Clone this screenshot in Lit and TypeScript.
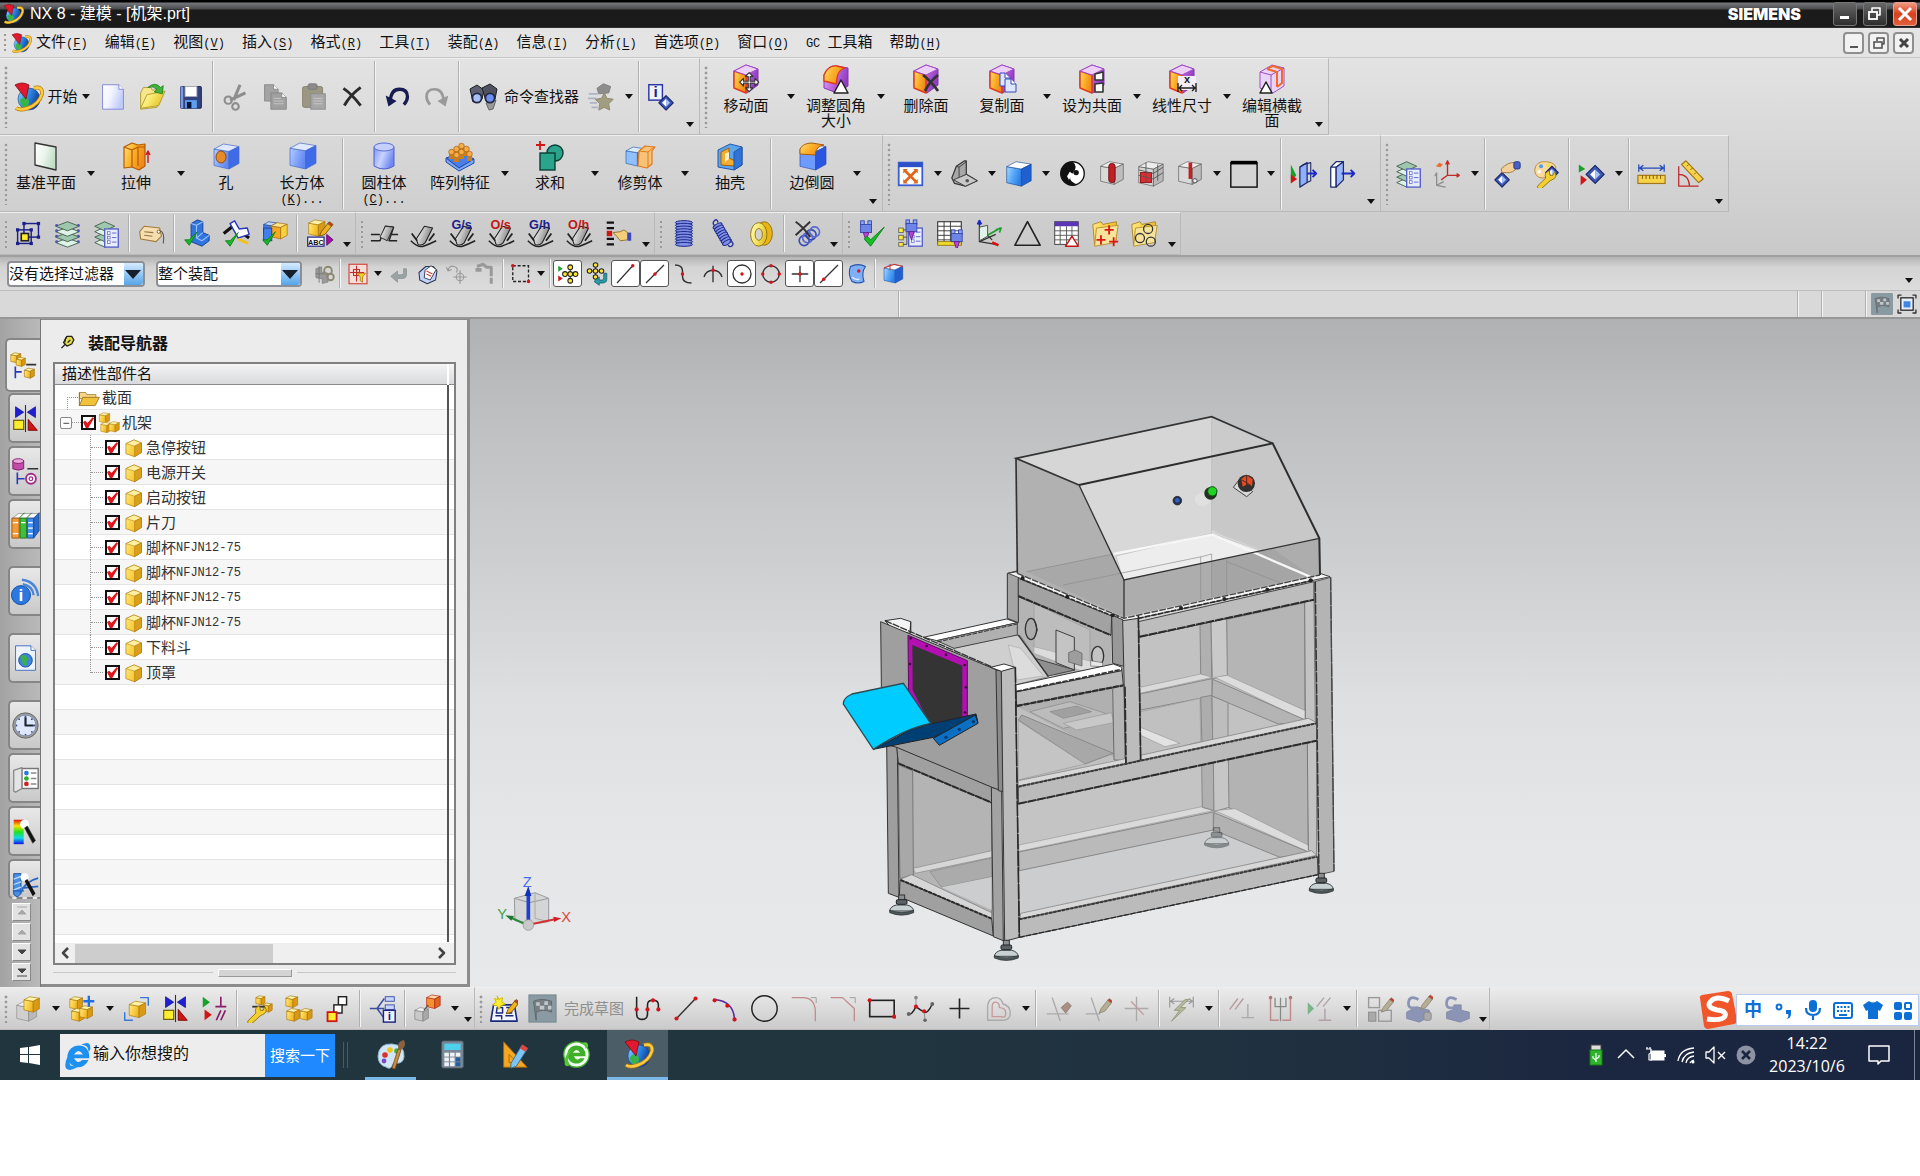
import { LitElement, html, svg, css, nothing } from "lit";
import { customElement, state } from "lit/decorators.js";

type Frag = unknown;

/* ---------- drawing helpers ---------- */
const p = (d: string, fill = "none", stroke = "none", w = 1): Frag =>
  svg`<path d=${d} fill=${fill} stroke=${stroke} stroke-width=${w} stroke-linejoin="round" />`;
const c = (x: number, y: number, r: number, fill = "none", stroke = "none", w = 1): Frag =>
  svg`<circle cx=${x} cy=${y} r=${r} fill=${fill} stroke=${stroke} stroke-width=${w} />`;
const r = (x: number, y: number, w: number, h: number, fill = "none", stroke = "none", sw = 1, rx = 0): Frag =>
  svg`<rect x=${x} y=${y} width=${w} height=${h} rx=${rx} fill=${fill} stroke=${stroke} stroke-width=${sw} />`;
const t = (x: number, y: number, s: number, fill: string, text: string): Frag =>
  svg`<text x=${x} y=${y} font-size=${s} fill=${fill} font-weight="700" text-anchor="middle" font-family="Liberation Sans, sans-serif">${text}</text>`;
const g = (tr: string, body: Frag, op = 1): Frag => svg`<g transform=${tr} opacity=${op}>${body}</g>`;

const cube = (x: number, y: number, s: number, front: string, top: string, side: string, line: string): Frag => {
  const q = (a: number, b: number) => `${x + a * s} ${y + b * s}`;
  return [
    p(`M${q(0, 0.2)}L${q(0.6, 0.3)}L${q(0.6, 1)}L${q(0, 0.86)}Z`, front, line, 0.7),
    p(`M${q(0, 0.2)}L${q(0.38, 0)}L${q(1, 0.1)}L${q(0.6, 0.3)}Z`, top, line, 0.7),
    p(`M${q(0.6, 0.3)}L${q(1, 0.1)}L${q(1, 0.78)}L${q(0.6, 1)}Z`, side, line, 0.7),
  ];
};
const gold = (x: number, y: number, s: number) => cube(x, y, s, "url(#gGold)", "#fff3a8", "#d79a12", "#a87408");
const blue = (x: number, y: number, s: number) => cube(x, y, s, "url(#gBlue)", "#dfe9ff", "#3f6be8", "#4668c8");
const sky = (x: number, y: number, s: number) => cube(x, y, s, "url(#gSky)", "#ffffff", "#1f5fd0", "#18499c");
const grey = (x: number, y: number, s: number) => cube(x, y, s, "#c9c9c9", "#f2f2f2", "#a9a9a9", "#7d7d7d");
const wire = (x: number, y: number, s: number) => [
  cube(x, y, s, "#d9d9d9", "#efefef", "#bdbdbd", "#555"),
];
const check = p("M4 22l5 6 9-15-9 9z", "#19b82a", "#0c7f18", 1);
const tick = (x: number, y: number) => g(`translate(${x} ${y})`, check);
const diamond = (x: number, y: number, s: number) => [
  p(`M${x} ${y - s}L${x + s} ${y}L${x} ${y + s}L${x - s} ${y}Z`, "#3d56b8", "#16245e", 1.2),
  p(`M${x} ${y - s * 0.55}V${y + s * 0.55}L${x - s * 0.55} ${y}Z`, "#fff"),
  p(`M${x} ${y - s * 0.55}V${y + s * 0.55}L${x + s * 0.55} ${y}Z`, "#a9c3f5"),
];
const layers = (x: number, y: number, w = 24, n = 4, pins = false) =>
  Array.from({ length: n }, (_, i) => n - 1 - i).map((i) => [
    p(`M${x} ${y + 5 + i * 6}l${w / 2}-5 ${w / 2} 5-${w / 2} 5z`, i % 2 ? "#dff2e6" : "#9fc7ad", "#3f5f4c", 1),
    pins ? [c(x + 1, y + 4 + i * 6, 1.6, "#4d55b8"), c(x + w - 1, y + 4 + i * 6, 1.6, "#4d55b8")] : nothing,
  ]);
const list = (x: number, y: number) => [
  r(x, y, 15, 20, "#e9eeff", "#5560c8", 1.5),
  [4, 9, 14].map((d) => [r(x + 3, y + d - 1, 3, 3, "#fff", "#5560c8", 0.8), p(`M${x + 8} ${y + d + 0.5}h5`, "none", "#5560c8")]),
];
const page = (x: number, y: number, w: number, h: number, fill: string, line: string) => [
  p(`M${x} ${y}h${w - 5}l5 5v${h - 5}h-${w}z`, fill, line, 1),
  p(`M${x + w - 5} ${y}v5h5`, "#fff", line, 1),
];
const pencil = (x: number, y: number, a = "#f2b21c", b = "#7a5408") => [
  p(`M${x} ${y}l2-5 8-10 4 3-8 10z`, a, b, 1),
  p(`M${x + 9} ${y - 14}l2-2 4 3-2 2z`, "#c93a2a", b, 0.8),
];
const wrench = (x: number, y: number) =>
  p(`M${x} ${y}l9-9q-2-6 4-8l1 5 3 0 2-4q4 6-3 9l-2 1-10 9q-4 1-4-3z`, "#f3cf2f", "#8f6e05", 1);
const face = (extra: Frag) => [
  p("M4 8L16 2 28 6 28 22 17 30 4 24Z", "url(#gPurple)", "#8a35b3", 1),
  p("M4 8L16 12V30L4 25Z", "url(#gOrange)", "#e03a1a", 1.5),
  p("M4 8L16 2 28 6 16 12Z", "#ecd0f8", "#a04cc8", 1),
  extra,
];
const weld = (tag = "", color = "") => [
  p("M2 24q8 8 14 6t14-6", "none", "#222", 1.6),
  p("M8 22L17 8l9 2-8 16q-4 4-8 2z", "url(#gSteel)", "#222", 1.2),
  p("M3 16l6 8M28 16l-6 8", "none", "#222", 2),
  tag ? t(15, 11, 14, color, tag) : nothing,
];
const dot = (x: number, y: number) => c(x, y, 2.3, "#d4141b");
const redline = (x1: number, y1: number, x2: number, y2: number) => p(`M${x1} ${y1}L${x2} ${y2}`, "none", "#333", 1.6);
const mirror = [
  p("M5 3v12l9-6zM27 3v12l-9-6z", "#1f1fd6", "#0f0f8a", 0.8),
  r(3, 18, 11, 10, "#ffee2e", "#6c5b00", 1.3),
  p("M19 17v12h10z", "#d01515", "#7c0000", 1),
  p("M16 1v30", "none", "#333", 1.2),
];
const nx = [
  c(17, 18, 11, "url(#gGlobe)", "#123b86", 0.6),
  p("M8 19q5-5 8-1t-2 9q-6-1-6-8z", "#37b34a"),
  p("M22 7q9-2 8 6-3 10-14 14-8 3-12 0", "none", "#b97a0a", 4),
  p("M22 7q9-2 8 6-3 10-14 14-8 3-12 0", "none", "#fbcb42", 2.6),
  p("M3 4q7-4 14 0l-3 14z", "#e01a2c", "#7f0912", 0.8),
];
const funnel = (x: number, y: number) => p(`M${x} ${y}h11l-4 5v7l-3-2v-5z`, "#f7cf2c", "#a07906", 1);
const spring = (x: number, y: number, w: number, n: number) =>
  Array.from({ length: n }, (_, i) => svg`<ellipse cx=${x + w / 2} cy=${y + i * 3} rx=${w / 2} ry="2.2" fill="#7f8fe8" stroke="#1c2a86" stroke-width="1.1" />`);
const probe = (x: number, y: number) => [
  r(x, y, 4, 5, "#8fa7f5", "#3547b0"), r(x + 8, y, 4, 5, "#8fa7f5", "#3547b0"),
  r(x, y + 4, 12, 9, "#6d85e6", "#3547b0"), p(`M${x + 3} ${y + 13}h6l-3 9z`, "#b64ad8", "#6b1a8a"),
];
const folder = (extra: Frag) => [p("M2 6l9-3 2 3 15-3v20l-24 6z", "url(#gGold)", "#a9852a", 1), p("M6 10l24-3-3 19-23 4z", "#f7e39a", "#b58f2e", 1), extra];
const star4 = (x: number, y: number) => p(`M${x - 5} ${y}h10M${x} ${y - 5}v10`, "none", "#e01515", 2);
const cross4 = p("M16 6l4 4h-3v5h5v-3l4 4-4 4v-3h-5v5h3l-4 4-4-4h3v-5h-5v3l-4-4 4-4v3h5v-5h-3z", "#fff", "#333", 1.2);

/* ---------- icon set ---------- */
const ICONS: Record<string, Frag> = {
  nx,
  newdoc: page(5, 3, 23, 27, "url(#gPage)", "#7d84d6"),
  open: [p("M4 12l3-6h8l2 3 9-1v6l-4 14-18 2z", "#f5e58b", "#b3982d"), p("M4 29l7-15 20-4-7 16z", "url(#gLemon)", "#b3982d"), p("M12 6q8-7 14 0l3-2-1 9-9-2 3-3q-4-4-10-2z", "#3fb33a", "#1b7418", 0.8)],
  save: [r(5, 5, 23, 24, "#31427e", "#141f4d", 1, 1), r(10, 5, 13, 11, "#fff", "#aab"), r(10, 20, 13, 9, "#5ea0f0"), r(12, 22, 5, 7, "#0a1238"), r(5, 5, 3, 24, "#7d9be0")],
  cut: [p("M21 3l-7 17M27 12L10 20", "none", "#8d8d8d", 3.4), c(8, 20, 4, "none", "#8d8d8d", 2.4), c(16, 27, 3.6, "none", "#8d8d8d", 2.4)],
  copy: [page(5, 3, 15, 18, "#a3a3a3", "#8a8a8a"), page(12, 12, 17, 18, "#a0a0a0", "#868686"), p("M15 18h8M15 21h11M15 24h11", "none", "#c9c9c9")],
  paste: [r(4, 5, 22, 23, "#9b9783", "#85816f", 1, 2), r(10, 2, 10, 6, "#8b8b8b", "#777", 1, 2), r(13, 13, 16, 17, "#a7a7a7", "#8b8b8b"), p("M16 18h10M16 21h10M16 24h10", "none", "#c9c9c9")],
  del: [p("M6 7q9 6 19 19M25 6Q13 15 7 26", "none", "#2b2b2b", 3.2)],
  undo: [p("M8 21Q9 8 18 8t9 8q0 5-4 9", "none", "#171c52", 3.6), p("M3 15l3 12 9-6z", "#171c52")],
  redo: [p("M24 21Q23 8 14 8t-9 8q0 5 4 9", "none", "#9a9a9a", 3), p("M29 15l-3 12-9-6z", "#9a9a9a")],
  finder: [p("M2 8l7-4 7 5-2 9-9 3z", "#5c6070", "#1c1e24"), p("M14 7l8-4 7 5-2 10-9 2z", "#50535e", "#1c1e24"), p("M18 22l10-3-3 9-4 1z", "#999", "#666"), c(9, 17, 4.6, "#a9c0f5", "#242a44", 1.8), c(22, 17, 4.6, "#6f90f0", "#242a44", 1.8)],
  tool: [p("M11 7l7-5 8 3-2 7-11 1z", "#8d8d8d", "#7c7c7c"), p("M19 12l3 6 7 1-5 5 1 7-6-3-6 3 1-7-5-5 7-1z", "#a19d80", "#8c886e"), p("M2 13h10M1 18h9M3 23h8M5 28h7", "none", "#aeb4c8", 2)],
  info: [r(2, 3, 15, 17, "#eef1ff", "#2c38a0", 1.6), t(9.5, 17, 17, "#1c2480", "i"), diamond(21, 23, 8)],
  moveface: face(g("translate(4 4) scale(.95)", cross4)),
  filletface: [p("M4 12Q8 2 16 3l12 2v18l-11 7-13-5z", "url(#gPurple)", "#8a35b3"), p("M4 12Q8 2 17 3l8 2q-7 2-8 10l-1 6-12-3z", "url(#gOrange)", "#e03a1a", 1.3), p("M21 17l7 13H14z", "#fff", "#222", 1.5)],
  delface: face(p("M13 12q8 6 15 16M28 12q-8 6-13 16", "none", "#333", 2.8)),
  copyface: face([page(14, 10, 10, 13, "#dfe6ff", "#3748b8"), page(19, 16, 11, 13, "#dfe6ff", "#3748b8")]),
  coplanar: face([p("M19 11l8-2v8h-8zM19 21l8-1v9h-8z", "#fff", "#333", 1.6)]),
  lineardim: face([r(12, 13, 18, 14, "#f4eef8"), p("M12 20v9M30 20v9M13 25h16M16 22l-3 3 3 3M26 22l3 3-3 3", "none", "#222", 1.4), t(21, 20, 11, "#222", "x")]),
  editsection: [p("M4 9l12-7 12 3v18l-11 7-13-5z", "#ead4f6", "#a04cc8"), p("M4 9l11 3v18M15 12l13-7", "none", "#a04cc8"), p("M11 6l10 3v15M11 6l6-3 9 3v14l-5 4", "none", "#ef6a2c", 2), p("M10 19l6 11H4z", "#fff", "#222", 1.5)],
  plane: [p("M5 3l21 4v23L5 25z", "url(#gPlane)", "#333", 1.3)],
  extrude: [p("M4 7l8-4 6 2 7-1v22l-6 4-7-3-8 1z", "url(#gOrange)", "#b55a05", 1.2), p("M4 7l8 3 6-3 7 0M12 10v17M18 7v19", "none", "#b55a05", 1.2), p("M28 23V12M26 15l2-4 2 4", "none", "#d01515", 1.4)],
  hole: [blue(4, 4, 25), svg`<ellipse cx="11" cy="17" rx="5" ry="6" fill="#e78a2a" stroke="#944b06" />`],
  block: blue(4, 3, 26),
  cyl: [p("M6 7v19q10 6 20 0V7z", "url(#gCyl)", "#4a5fd0"), svg`<ellipse cx="16" cy="7" rx="10" ry="4" fill="#c5d0ff" stroke="#5a6fd8" />`],
  pattern: [p("M2 18l16-6 12 7-15 9z", "#4b7ee8", "#1e4ba8"), p("M2 18v4l13 9 15-8v-4l-15 9z", "#7ea8f5", "#1e4ba8"), [[7, 12], [12, 9], [17, 6], [12, 15], [17, 12], [22, 9], [25, 14]].map(([x, y]) => [p(`M${x - 2} ${y}v7h5v-7z`, "#c97f1e"), c(x + 0.5, y, 2.8, "#f5ad4a", "#a86412", 0.7)])],
  unite: [c(21, 13, 8, "#2aa58c", "#0b3f35", 1.4), r(6, 13, 15, 17, "#2aa58c", "#0b3f35", 1.4), p("M6 1v9M2 5h9", "none", "#d01515", 1.8)],
  trim: [cube(2, 7, 19, "#8fc0ff", "#dcecff", "#4a8ae8", "#2f64b0"), p("M15 11l6-5 10 1-3 4v13l-5 4-9-2z", "#f7c277", "#e07a1a", 1.2), p("M15 11l9 1v15M24 12l6-5", "none", "#e07a1a")],
  shell: [p("M4 10l12-6 12 3v18l-8 5-16-3z", "#5fa4ee", "#2158a5"), p("M7 12l8-4v10l6 3v5L7 25z", "#f4ad33", "#9e6206"), p("M11 14l4-2v7l-4 3z", "#fff1c4"), p("M20 12l8-5v18l-8 5z", "#2f74d6", "#2158a5")],
  blend: [cube(4, 4, 26, "#6e9bff", "#e6eeff", "#2a57e0", "#2c4fb5"), p("M4 14V9q3-6 12-6l12 2q-8 1-9 10z", "url(#gOrange)", "#a8600a")],
  fit: [r(3, 4, 26, 25, "#fff", "#3c5fd0", 2), r(3, 4, 26, 5, "#2b50c8"), p("M10 13l12 12M22 13L10 25", "none", "#e0651a", 3), p("M8 11h5l-5 5zM24 11h-5l5 5zM8 27h5l-5-5zM24 27h-5l5-5z", "#e0651a")],
  seat: [p("M2 21L7 8l9-6 2 0v15l12 7-13 6-12-3z", "#a7a7a7", "#3a3a3a", 1.4), p("M7 8l3 1 0 12 8-4M10 9l8-6", "none", "#3a3a3a"), p("M4 23l14-6 12 7-13 6z", "#c9c9c9", "#3a3a3a"), c(19, 24, 2, "#555")],
  shaded: sky(3, 3, 27),
  yin: [c(16, 16, 13, "#fff", "#111", 1.5), p("M16 3a13 13 0 1 0 5 25Q9 24 16 16t0-13z", "#111"), c(20, 15, 3, "#111"), p("M13 14l4 3-5 6-2-4z", "#fff")],
  vcyl: [wire(4, 3, 25), r(13, 5, 7, 21, "#c21f24", "#6d0b0e", 1, 3)],
  vgrid: [cube(3, 3, 27, "#d4d4d4", "#ededed", "#b8b8b8", "#555"), r(5, 15, 12, 11, "#e02b30", "#8d1014"), p("M3 18l16 4 11-7M11 4v22M24 6v18M3 12l16 4 11-7", "none", "#555")],
  vpin: [wire(4, 3, 25), p("M17 4v18", "none", "#c21f24", 4), c(22, 24, 2.4, "#eee", "#444")],
  canvas: [r(2, 4, 29, 27, "#d4d4d4", "#111", 1.6), r(2, 2, 29, 4, "#000")],
  clipin: [p("M2 6v20l6-8zM2 8l6 5", "#19a02a"), p("M2 17v10l7-5z", "#d01515"), p("M12 9l8-5v22l-8 5z", "#8fb0ff", "#1d2c6e", 1.4), p("M12 9l4-3 8-2v20l-4 2", "none", "#1d2c6e", 1.2), p("M20 16h9M26 12l4 4-4 4", "none", "#1a28c8", 2)],
  clip: [p("M3 9h6v22H3zM3 9l6-6h8l-8 6", "#fff", "#1d2c6e", 1.4), p("M9 9l8-6v20l-8 8z", "#9db8ff", "#1d2c6e", 1.4), p("M15 16h13M25 12l4 4-4 4", "none", "#1a28c8", 2)],
  layerlist: [layers(3, 3, 22, 4), list(14, 11)],
  csys: [p("M16 3v15h12M16 18l-7 5M14 6l2-4 2 4M26 16l3 2-3 2", "none", "#c02a2a", 1.5), p("M4 15v14l8-4M4 29l10 2M4 15l-2 4", "none", "#8d8d8d", 1.4), p("M3 8l4-4 4 2-3 3z", "#ef6a2c")],
  handobj: [diamond(10, 23, 8), p("M9 11q8-8 15-7l3 5q-5 7-12 6l-5 0z", "#f3cf9a", "#9c7440"), r(23, 3, 7, 8, "#4860c8", "#27357c", 1, 2)],
  palette: [p("M3 12Q4 2 16 3t10 10-9 6q-3 2-6 2-8-1-8-9z", "#f8d9a0", "#b98a2e"), c(10, 8, 2.2, "#4aa0f0"), c(18, 7, 2.2, "#f4e04a"), c(8, 14, 2, "#fff"), diamond(22, 15, 7), wrench(6, 30)],
  showhide: [p("M2 6v9l7-4z", "#19a02a"), p("M4 18v11l7-6z", "#d01515"), diamond(20, 17, 10)],
  ruler: [p("M2 6v8M30 6v8M3 10h26M7 7l-4 3 4 3M25 7l4 3-4 3", "none", "#2448b8", 1.4), r(1, 18, 30, 9, "#f7d34a", "#a4761a", 1.3), p("M6 18v4M10 18v4M14 18v4M18 18v4M22 18v4M26 18v4", "none", "#7a5408")],
  angle: [p("M3 8v22h22M3 17q11 0 12 13", "none", "#c02a2a", 1.4), p("M6 6l5-4 19 20-5 4z", "#f7d34a", "#a4761a", 1.3), p("M12 8l2-2M16 12l2-2M20 17l2-2", "none", "#7a5408")],
  frames: [r(11, 5, 16, 15, "none", "#1b1f8c", 1.6), r(4, 12, 15, 15, "none", "#1b1f8c", 1.6), r(8, 16, 8, 8, "#ffee2e", "#222", 1.8), [[11, 5], [27, 5], [27, 20], [4, 12], [19, 12], [4, 27], [19, 27]].map(([x, y]) => r(x - 1.8, y - 1.8, 3.6, 3.6, "#1b1f8c"))],
  layerpins: layers(3, 3, 26, 4, true),
  tag: [p("M3 14l5-6 17 2 2 9-6 6-17-3z", "#f7deb0", "#a07c3c", 1.2), c(24, 14, 1.8, "#fff", "#7a5a20"), p("M8 14l10 1M8 18l9 1", "none", "#8f7340", 1.2), p("M25 13q6 1 4 14", "none", "#555", 1.2)],
  chkL: [p("M10 5l7-4 6 2v12l7 3v6l-8 6-12-5z", "#2f74e0", "#173f8f"), p("M10 5l6 2v14l6 3M16 7l7-4M22 24l8-6M16 21l7-6", "none", "#9cc2ff", 1.2), tick(-1, 1)],
  chkP: [p("M3 16L13 8l18 13", "none", "#111", 3.5), p("M10 5l5-3 5 9 9-1 2 7-12 4z", "#fff", "#2c3ab8", 1.6), p("M19 22l11 5", "none", "#f2c21a", 3), tick(1, 2)],
  chkB: [cube(4, 3, 15, "#3f7ff0", "#bcd6ff", "#1f55bd", "#173f8f"), cube(12, 4, 18, "#f6a81f", "#ffe28a", "#f8d23c", "#9e6206"), r(4, 10, 9, 14, "#3f7ff0", "#173f8f"), tick(-1, 1)],
  annot: [gold(4, 1, 18), r(3, 20, 18, 10, "#fff", "#1b1f8c", 1.3), t(12, 28.5, 8, "#111", "ABC"), pencil(16, 19), p("M24 17v12l7-6z", "#a012a8", "#5e0a63")],
  weld0: [p("M1 17h10M1 24h10l6-16 9 1-5 15h9M24 17h7", "none", "#222", 1.6), p("M11 20l6-12 9 1-7 15z", "url(#gSteel)", "#222")],
  weld1: weld(),
  weldGs: weld("G/s", "#1b1f8c"),
  weldOs: weld("O/s", "#c01818"),
  weldGh: weld("G/h", "#1b1f8c"),
  weldOh: weld("O/h", "#c01818"),
  thickpick: [p("M3 4h8M3 10h8M3 22h8M3 28h8", "none", "#111", 2.6), r(3, 13, 6, 6, "#d01515"), p("M10 15l8-1 4-2 4 3v8l-8 1-4-5z", "#f3cf7a", "#8f6e25"), r(26, 15, 4, 9, "#3a48b8")],
  spring1: spring(7, 4, 19, 9),
  spring2: [g("rotate(-30 16 16)", spring(10, 6, 11, 8)), p("M8 8q-4-3-1-6t4 2M24 24q5 2 3 5t-5 0", "none", "#2a3a9a", 1.6)],
  ring: [svg`<ellipse cx="19" cy="16" rx="9" ry="13" fill="#e8b41a" stroke="#8f6e05" />`, svg`<ellipse cx="13" cy="17" rx="9" ry="13" fill="url(#gLemon)" stroke="#8f6e05" />`, svg`<ellipse cx="13" cy="17" rx="4" ry="6.5" fill="#d2d2d2" stroke="#8f6e05" />`],
  springdel: [g("rotate(-40 18 20)", [c(12, 20, 5.5, "none", "#3a4bb0", 1.8), c(17, 20, 5.5, "none", "#5a6bd0", 1.8), c(22, 20, 5.5, "none", "#3a4bb0", 1.8), c(27, 20, 5.5, "none", "#5a6bd0", 1.8)]), p("M4 3q9 6 16 17M20 3L4 18", "none", "#333", 2.2)],
  probe1: [probe(4, 2), p("M8 22l7 8L30 9l-15 14-4-4z", "#14bf24", "#0c7f18", 1)],
  probe2: [r(3, 10, 5, 5, "#ffee2e", "#666"), r(3, 18, 5, 5, "#ffee2e", "#666"), r(3, 26, 5, 4, "#ffee2e", "#666"), p("M8 12h4v16H8M8 20h4", "none", "#444"), list(14, 10), probe(11, 1)],
  probe3: [r(3, 3, 26, 25, "#fff", "#333", 1.2), p("M3 8h26M3 13h26M3 18h26M3 23h26M10 3v25M17 3v25", "none", "#333"), r(3, 25, 26, 4, "#f2dc2e", "#8f7a05"), probe(18, 12)],
  datumcs: [p("M6 3v22l18-8M6 9l14 14M6 25l18 3", "none", "#333", 1.4), p("M6 9l9-2v12l-9 5z", "#e1f2e8", "#444"), p("M4 6l2-4 2 4", "none", "#1a28c8", 2.2), p("M24 12l6-2-2 5M15 18l14-8", "none", "#19a02a", 1.8), p("M20 26l7 3", "none", "#d01515", 3)],
  tri: p("M16 3l14 26H2z", "none", "#222", 1.8),
  table: [r(3, 3, 26, 25, "#fff", "#444", 1.1), r(3, 3, 26, 5, "#5b35b8"), p("M3 13h26M3 18h26M3 23h26M9 8v20M16 8v20M22 8v20", "none", "#555"), p("M22 19l7 11H15z", "#fff", "#c01818", 1.6)],
  foldstars: folder([star4(20, 12), star4(11, 23), star4(25, 25)]),
  foldrings: folder([c(20, 11, 5, "none", "#333", 1.4), c(11, 21, 5, "none", "#333", 1.4), c(23, 25, 5, "none", "#333", 1.4)]),
  gface: g("translate(4 3) scale(.85)", [p("M3 7l9-3v8l10 2v14l-9 2v-7l-10-2z", "#9a9a9a", "#777"), c(22, 10, 6, "none", "#8c886e", 3), c(26, 20, 5, "none", "#8c886e", 3), p("M8 3v26M2 15h14", "none", "#777", 1.4)]),
  snapfilter: [r(4, 3, 24, 26, "#f4dcd8", "#d03a30", 1.4), p("M14 5v21M5 14h19M10 10h8v8h-8z", "none", "#c02a2a", 1.4), funnel(15, 15)],
  back: p("M26 9v8q0 5-6 5h-6v5l-9-8 9-7v5h6q2 0 2-3V9z", "#9aa3a3", "#8b9393"),
  note: [p("M4 14l9-8h10l5 6-2 12-11 5-10-5z", "#c6d2f5", "#2a3550", 1.4), p("M12 11l8-6 7 5-8 14-8-3z", "#fff", "#2a3550", 1.2), p("M14 12l8 4M14 16l6 3", "none", "#d03a30", 1.4)],
  gcurve: [c(20, 20, 5, "none", "#999", 1.4), p("M20 11v18M11 20h18M4 12q1-8 8-6t3 8M4 12l-2-5M4 12l5-2", "none", "#999", 1.6)],
  gpath: [p("M4 6l8-3 5 4h6v7M23 14v5M23 21v8", "none", "#999", 4), r(2, 8, 8, 5, "#999")],
  rect: [svg`<rect x="5" y="5" width="21" height="21" fill="none" stroke="#222" stroke-width="1.8" stroke-dasharray="4 2.5" />`, dot(5, 5), dot(26, 26)],
  snapall: [p("M3 5v8l6-4z", "#19a02a"), p("M3 18v8l6-4z", "#d01515"), p("M19 7v18M10 16h18", "none", "#333", 1.4), [[19, 7], [19, 25], [12, 16], [26, 16], [19, 16]].map(([x, y]) => c(x, y, 3.2, "#ffe62e", "#222", 1.4))],
  snaprot: [p("M14 4v16M6 12h16", "none", "#333", 1.4), [[14, 4], [14, 20], [6, 12], [22, 12], [14, 12]].map(([x, y]) => c(x, y, 3, "#ffe62e", "#222", 1.4)), p("M29 15v8q0 5-6 5h-4v3l-7-5 7-6v4h4q2 0 2-3v-6z", "#2a9aa8", "#0f5a66")],
  endpt: [redline(4, 28, 24, 6), dot(25, 5)],
  midpt: [redline(4, 28, 28, 4), dot(16, 16)],
  ctrlpt: [p("M4 4q10 0 10 8v7q0 9 12 9", "none", "#333", 2), dot(14, 16)],
  intpt: [p("M4 20q3-9 12-9t12 9M16 5v22", "none", "#333", 1.8), dot(16, 11)],
  center: [c(16, 16, 12, "none", "#333", 1.8), dot(16, 16)],
  quad: [c(16, 16, 11, "none", "#333", 1.8), dot(16, 5), dot(16, 27), dot(5, 16), dot(27, 16)],
  plus: [p("M16 5v22M5 16h22", "none", "#333", 1.8), dot(16, 16)],
  oncurve: [redline(4, 28, 28, 4), dot(9, 23)],
  onface: [p("M6 6q10-5 20 0-6 8-2 20-8 4-16 0Q2 16 6 6z", "#7fb0f5", "#2350a8", 1.4), dot(17, 12), p("M8 20q4 4 10 3", "none", "#dfeaff", 2)],
  solid: [sky(4, 3, 25), p("M4 8l14-5 11 3M12 3v8", "none", "#d03a30", 1.4)],
  flag: [r(1, 1, 30, 30, "#8a9aa3", "#74848d"), p("M6 8q9-4 20 0v12q-9-4-17 0v9M6 8l3 21", "#777f84", "#5f666b"), p("M9 9h4v4h-4zM18 8h4v4h-4zM13 13h5v4h-5zM22 13h4v4h-4z", "#c1c8cc")],
  fullscr: [p("M3 8V3h5M24 3h5v5M29 24v5h-5M8 29H3v-5", "none", "#333", 2), r(7, 7, 18, 18, "#e8f0ff", "#333", 2), r(11, 12, 10, 9, "#3f86e8")],
  load: [cube(3, 8, 22, "#cfcfcf", "#f0f0f0", "#b9b9b9", "#888"), gold(11, 3, 17)],
  addcomp: [gold(2, 3, 14), gold(4, 16, 14), gold(13, 13, 14), p("M23 2v12M17 8h12", "none", "#1f6fe0", 2.6)],
  movecomp: [gold(8, 8, 18), p("M20 4h9v9M24 4h5v5M3 20v9h9M3 25v4h5", "none", "#3a78d8", 1.6)],
  mirror,
  constrain: [p("M3 3v12l8-6z", "#19a02a"), p("M5 17v12l8-6z", "#d01515"), p("M23 3v11M17 14h12M18 29l5-11M23 29l5-11", "none", "#8a1a6a", 1.8)],
  tools: [gold(12, 2, 10), gold(20, 10, 10), p("M8 14h14", "none", "#333", 2), wrench(3, 30)],
  threecubes: [gold(2, 2, 13), gold(3, 16, 14), gold(18, 16, 13)],
  seq: [r(17, 3, 9, 9, "#fff", "#222", 1.6), r(12, 12, 9, 9, "#fff", "#222", 1.6), r(5, 20, 10, 10, "#ffee2e", "#d01515", 2)],
  infotree: [p("M2 16h8l8-11M10 16h8M10 16l8 11", "none", "#3a4ba0", 1.6), r(19, 3, 10, 5, "#c8d6ff", "#3a4ba0"), r(19, 12, 10, 5, "#c8d6ff", "#3a4ba0"), r(17, 18, 13, 13, "#eef1ff", "#1c2480", 1.6), t(23.5, 29, 13, "#1c2480", "i")],
  explode: [grey(2, 15, 15), cube(15, 1, 15, "#f5932b", "#ffd7a0", "#e0651a", "#b01515"), p("M12 18l5-6", "none", "#555", 1.4)],
  sketch: [p("M5 12h23l3 18H2z", "#f4f6ff", "#1b2a7c", 1.8), p("M9 15h6v6H8zM19 15h5l1 6h-6M7 24h7v4M18 24h9", "none", "#1b2a7c", 1.6), p("M9 2l2 4 4-2-1 5 4 2-5 2-2 4-2-4-5-1 4-3-2-4 4 1z", "#ffee2e", "#d0b800"), pencil(19, 22)],
  profile: [p("M4 3v19q0 6 6 6t6-6V12q0-5 6-5t6 5v6", "none", "#222", 1.7), dot(4, 17), dot(16, 17), dot(28, 17), dot(22, 7)],
  line: [redline(5, 27, 26, 5), dot(5, 27), dot(26, 5)],
  arc: [p("M4 6q22 2 22 24", "none", "#5a2a9a", 1.7), dot(4, 7), dot(18, 13), dot(26, 28)],
  circle: c(16, 16, 14, "none", "#222", 1.6),
  gfillet: [p("M3 4h12q13 0 14 14v12", "none", "#c08a8a", 1.4), p("M24 4h6v6", "none", "#999")],
  gchamfer: [p("M3 4h13l13 12v14", "none", "#c08a8a", 1.4), p("M24 4h6v6", "none", "#999")],
  rectangle: [r(3, 7, 27, 18, "none", "#222", 1.8), dot(3, 7), dot(30, 25)],
  spline: [p("M3 22q3 2 8-8 5 4 9 6t9-9", "none", "#222", 1.6), p("M11 4v10M21 28l-1-8", "none", "#888"), dot(11, 14), dot(20, 19), c(11, 4, 2, "#888"), c(29, 11, 2.2, "#666"), c(3, 22, 2.2, "#666"), c(21, 29, 2, "#666")],
  point: p("M16 5v22M5 16h22", "none", "#222", 1.8),
  goffset: [p("M4 29V13q1-9 9-9 6 0 8 7 8 2 8 10t-9 8z", "none", "#aaa", 1.5), p("M9 25V14q0-5 4-5t4 6q7 0 7 6t-5 4z", "none", "#c79a9a", 1.5)],
  gtrim1: [p("M3 22h24M9 4l9 26", "none", "#aaa", 1.5), p("M19 15l7-6 4 4-6 8z", "#a98f83", "#8f7a70")],
  gtrim2: [p("M3 22h16M9 4l9 26", "none", "#aaa", 1.5), pencil(18, 21, "#b5ae93", "#8f8a78")],
  gtrim3: [p("M16 3v27M3 16h26", "none", "#aaa", 1.5), p("M10 8l14 15", "none", "#c79a9a", 1.5)],
  gdim: [p("M3 3v12M29 3v12M4 8h24M8 5L4 8l4 3M24 5l4 3-4 3", "none", "#999", 1.3), p("M20 6L8 18h6L5 30l16-15h-6l9-9z", "#b5b89a", "#93967a")],
  gcon1: [p("M3 17L12 5M9 17L18 5", "none", "#b89a9a", 1.5), p("M23 11v15M16 26h14", "none", "#aaa", 1.5)],
  gcon2: [p("M5 4v25h9M27 4v25h-9", "none", "#c08a8a", 1.6), p("M10 4v10h12V4M16 4v26", "none", "#888", 1.4), c(5, 4, 2, "#b07a7a"), c(27, 4, 2, "#b07a7a")],
  gcon3: [p("M3 9v14l7-7z", "#7ab58a"), p("M13 14l8-10M20 14l8-10M22 16v13M15 29h14", "none", "#b0a0a8", 1.5)],
  gcopy: [r(4, 4, 12, 11, "none", "#999", 1.5), r(15, 18, 14, 12, "none", "#999", 1.5), r(4, 20, 8, 10, "#aaa", "#888"), pencil(18, 20, "#b5ae93", "#8f8a78")],
  gfind: [p("M3 20l11-6 14 4v7l-11 6-14-4z", "#8b94b5", "#7f89a5"), p("M16 6q-10-5-11 3t8 6", "none", "#8b94b5", 3), pencil(18, 17, "#b5ae93", "#8f8a78"), r(22, 20, 8, 9, "#aaa", "#888", 1, 2)],
  gfind2: [p("M4 20l8-3v-5h8v6l9 2v7l-10 4-15-4z", "#8b94b5", "#7f89a5"), p("M15 6Q5 1 4 9t8 6", "none", "#8b94b5", 3)],
  asmnav: [gold(2, 2, 11), gold(8, 7, 10), p("M19 15h11", "none", "#333", 1.8), p("M7 17v13M7 23h7", "none", "#2a3ab8", 1.8), gold(17, 19, 11)],
  partnav: [p("M2 4v9q6 3 12 0V4z", "#c24aa8", "#7a1a68"), svg`<ellipse cx="8" cy="4.5" rx="6" ry="2.6" fill="#eaa8dc" stroke="#7a1a68" />`, p("M18 13h12", "none", "#333", 1.6), p("M7 17v13M7 24h8", "none", "#2a3ab8", 1.8), c(22, 24, 5.5, "#fff", "#a02a88", 2), c(22, 24, 2, "none", "#a02a88", 1.4)],
  books: [p("M2 9l6-5h20l3 0-5 5z", "#fff", "#888", 0.8), p("M1 9h8v22H1z", "#f09a3a", "#9e5206"), p("M10 9h7v22h-7z", "#3fc03a", "#1b7418"), p("M18 9h7v22h-7z", "#3f8ff0", "#1a4a98"), p("M25 9l6-6v20l-6 8z", "#2868c8", "#1a4a98"), p("M2 14h6M2 26h6M11 14h5M19 14h5M19 20h5M19 26h5", "none", "#fff", 1.4), p("M9 9l6-6M17 9l6-6", "none", "#1b7418")],
  infoball: [c(11, 20, 10.5, "#2a78e0", "#134a9c"), t(11, 27, 19, "#fff", "i"), p("M12 3q16 2 18 18M13 8q11 2 12 12", "none", "#4a86d8", 2.6)],
  webpage: [page(5, 2, 22, 27, "#eef4ff", "#3a68c0"), c(16, 18, 7.5, "#3a86e0", "#1a4a98"), p("M10 14q5-4 7 0t4 1q-2 3-4 4l1 5q-5-1-6-5z", "#3fae4a")],
  clock: [c(16, 16, 14, "#9a9a9a", "#666"), c(16, 16, 11.5, "#dfe8fb", "#7f8ba8"), p("M16 7v9h9", "none", "#1b2430", 2.4), [[16, 6], [26, 16], [16, 26], [6, 16], [23, 9], [23, 23], [9, 23], [9, 9]].map(([x, y]) => c(x, y, 1, "#33508c"))],
  doccard: [r(12, 5, 18, 22, "#fff", "#777", 1.6), p("M3 7l9-3v23l-7 4-2-1z", "#e4e4e4", "#888", 1.4), c(17, 10, 2.6, "#2a78e0"), c(17, 16, 2.6, "#2ab02a"), c(17, 22, 2.6, "#d02020"), p("M22 10h6M22 16h6M22 22h6", "none", "#888", 1.6)],
  spectrum: [r(3, 3, 11, 27, "url(#gRain)"), c(15, 8, 5, "#fff"), p("M15 12l3-2 9 16-3 3z", "#111", "#444", 0.8)],
  drill: [p("M3 4h8v22l-4 4-4-3z", "#4a90e0", "#1a4a98"), p("M3 10l8-3M3 16l8-3M3 22l8-3", "none", "#bcdcff", 1.4), p("M10 26q6-14 20-17M12 20l18-2M2 23h12", "none", "#2a68c8", 2), c(15, 8, 4.5, "#fff"), p("M15 12l3-2 9 16-3 3z", "#111")],
  pin: [p("M8 14l5-9 7 0 3 5-3 6-7 3z", "#e4dc4a", "#222", 1.8), p("M10 14q-1-5 3-9", "none", "#222", 1.6), p("M11 16l-6 6M14 14l4-4", "none", "#222", 2)],
  folderopen: [p("M2 8h9l2 3h13v6H2z", "#f7d68a", "#8f6e1a"), p("M2 27l5-12h24l-6 12z", "#f2c13a", "#8f6e1a", 1.2), p("M2 8v19", "none", "#8f6e1a", 1.4)],
  asm: [gold(2, 1, 15), gold(4, 15, 15), gold(16, 14, 15)],
  part: [p("M3 9L16 3l12 5v15L17 30 3 25z", "url(#gGold)", "#a87408", 1), p("M3 9l14 4 11-5L16 3z", "#fff0a0", "#a87408", 0.8), p("M17 13l11-5v15l-11 7z", "#d9a01c", "#a87408", 0.8)],
  paint: [p("M3 18Q4 5 17 6t12 13q-1 7-8 6-4 0-4 3-2 4-6 1-8-2-8-11z", "#cfe6f5", "#8fb4cc"), c(10, 17, 2.8, "#d8322a"), c(15, 12, 2.8, "#f2c21a"), c(22, 13, 2.8, "#3fae4a"), c(9, 23, 2.4, "#7a4ac8"), p("M17 30l6-19 3 1-6 19z", "#c98a4a", "#7a4a18", 0.8), p("M23 11q-1-8 6-9 3 6-3 10z", "#8a6240")],
  calc: [r(4, 1, 24, 30, "#7a8794", "#4a5662", 1, 2), r(7, 4, 18, 7, "#4fd0ee"), [0, 1, 2].map((i) => [0, 1, 2].map((j) => r(7 + i * 6.3, 14 + j * 5.3, 5, 4.3, i === 2 && j > 0 ? "#1f5f9e" : "#eef3f7")))],
  setsq: [p("M4 2v28h26zM10 16v9h9z", "#f5a623", "#a86405", 1), svg`<path d="M12 26L24 6l6 4-12 19-6 2z" fill="#7fc4f2" stroke="#2d6f9e"/>`, p("M22 9l3-4 6 4-3 4z", "#e0443a")],
  eie: [c(16, 16, 14, "#f2fff0", "#3fae2a", 1.4), p("M16 6a10 10 0 1 0 9 14h-5q-4 4-7-2h13q0-12-10-12zm-4 8q4-6 8 0z", "#3fae2a"), p("M3 27Q1 18 12 8 3 21 9 27q-4 4-6 0zM20 4q9-4 9 3l-3 3q0-6-6-6z", "#56c838")],
  ie: [p("M16 5a12 12 0 1 0 11 16h-7q-5 5-9-2h17q0-14-12-14zm-5 10q5-8 10 0z", "#1e90f0"), p("M2 30Q-1 20 12 8 4 20 7 27q8 3 15-4Q8 36 2 30zM19 4q11-5 10 5l-2 4q1-9-8-9z", "#1e90f0")],
};

const icon = (name: string, cls = "ic") => html`<svg class=${cls} viewBox="0 0 32 32" aria-hidden="true">${ICONS[name]}</svg>`;

/* ---------- toolbar data ---------- */
type Item =
  | { k: "b"; i: string; l: string; d?: boolean }
  | { k: "B"; i: string; l: string; key?: string; d?: boolean }
  | { k: "|" };
const b = (i: string, l: string, d = false): Item => ({ k: "b", i, l, d });
const B = (i: string, l: string, d = false, key = ""): Item => ({ k: "B", i, l, d, key });
const S: Item = { k: "|" };

const MENUS: [string, string][] = [["文件", "F"], ["编辑", "E"], ["视图", "V"], ["插入", "S"], ["格式", "R"], ["工具", "T"], ["装配", "A"], ["信息", "I"], ["分析", "L"], ["首选项", "P"], ["窗口", "O"], ["GC 工具箱", ""], ["帮助", "H"]];

const SYNC: Item[] = [B("moveface", "移动面", true), B("filletface", "调整圆角大小", true), B("delface", "删除面"), B("copyface", "复制面", true), B("coplanar", "设为共面", true), B("lineardim", "线性尺寸", true), B("editsection", "编辑横截面")];
const FEATURE: Item[] = [B("plane", "基准平面", true), B("extrude", "拉伸", true), B("hole", "孔"), B("block", "长方体", false, "K"), S, B("cyl", "圆柱体", false, "C"), B("pattern", "阵列特征", true), B("unite", "求和", true), B("trim", "修剪体", true), B("shell", "抽壳"), S, B("blend", "边倒圆", true)];
const VIEW: Item[] = [b("fit", "适合窗口", true), b("seat", "定向视图", true), b("shaded", "带边着色", true), b("yin", "面分析"), b("vcyl", "剖切"), b("vgrid", "栅格"), b("vpin", "定位", true), b("canvas", "背景", true), S, b("clipin", "编辑截面"), b("clip", "剪切截面")];
const UTIL: Item[] = [b("layerlist", "图层设置"), b("csys", "坐标系", true), S, b("handobj", "编辑对象"), b("palette", "对象显示"), S, b("showhide", "显示和隐藏", true), S, b("ruler", "测量距离"), b("angle", "测量角度")];
const ROW3: Item[][] = [
  [b("frames", "框架"), b("layerpins", "图层"), b("layerlist", "图层列表"), S, b("tag", "属性"), S, b("chkL", "检查实体"), b("chkP", "检查草图"), b("chkB", "检查装配"), S, b("annot", "注释")],
  [b("weld0", "焊缝"), b("weld1", "角焊"), b("weldGs", "G/s"), b("weldOs", "O/s"), b("weldGh", "G/h"), b("weldOh", "O/h"), b("thickpick", "厚度")],
  [b("spring1", "压缩弹簧"), b("spring2", "拉伸弹簧"), b("ring", "环"), S, b("springdel", "删除弹簧")],
  [b("probe1", "检验"), b("probe2", "检验列表"), b("probe3", "检验表"), b("datumcs", "基准坐标系"), b("tri", "三角"), b("table", "表格"), b("foldstars", "点集"), b("foldrings", "圆集")],
];
const ASM: Item[] = [b("load", "加载", true), b("addcomp", "添加组件", true), b("movecomp", "移动组件"), b("mirror", "镜像装配"), b("constrain", "装配约束"), S, b("tools", "工具"), b("threecubes", "组件阵列"), b("seq", "顺序"), S, b("infotree", "信息"), S, b("explode", "爆炸图", true)];
const SKETCH: Item[] = [b("profile", "轮廓"), b("line", "直线"), b("arc", "圆弧"), b("circle", "圆"), b("gfillet", "圆角"), b("gchamfer", "倒角"), b("rectangle", "矩形"), b("spline", "样条"), b("point", "点"), b("goffset", "偏置", true), S, b("gtrim1", "快速修剪"), b("gtrim2", "快速延伸"), b("gtrim3", "拐角"), S, b("gdim", "尺寸", true), S, b("gcon1", "约束"), b("gcon2", "对称"), b("gcon3", "显示约束", true), S, b("gcopy", "复制"), b("gfind", "附着"), b("gfind2", "定向")];

const SNAPS: [string, string, boolean][] = [["snapall", "启用捕捉", true], ["snaprot", "重置", false], ["endpt", "端点", true], ["midpt", "中点", true], ["ctrlpt", "控制点", false], ["intpt", "交点", false], ["center", "圆心", true], ["quad", "象限点", false], ["plus", "现有点", true], ["oncurve", "曲线上的点", true], ["onface", "面上的点", false]];

const PARTS: [string, string][] = [["急停按钮", ""], ["电源开关", ""], ["启动按钮", ""], ["片刀", ""], ["脚杯", "NFJN12-75"], ["脚杯", "NFJN12-75"], ["脚杯", "NFJN12-75"], ["脚杯", "NFJN12-75"], ["下料斗", ""], ["顶罩", ""]];

/* ---------- 3D model, drawn on a canvas of third-pixel units ---------- */
const E = "#3c3c3c";
const q = (pts: string, fill: string, stroke = "none", w = 3) => svg`<polygon points=${pts} fill=${fill} stroke=${stroke} stroke-width=${w} stroke-linejoin="round" />`;
const l = (pts: string, stroke = E, w = 4, dash = "") => svg`<polyline points=${pts} fill="none" stroke=${stroke} stroke-width=${w} stroke-dasharray=${dash || "none"} />`;
const foot = (x: number, y: number, op = 1) => svg`<g transform=${`translate(${x} ${y})`} opacity=${op}>
  <rect x="-9" y="-42" width="18" height="30" fill="#8a8f92" stroke="#333" stroke-width="3" />
  <rect x="-16" y="-28" width="32" height="14" rx="4" fill="#5b6265" stroke="#222" stroke-width="3" />
  <path d="M-36 6Q-34-8-16-12H16Q34-8 36 6Z" fill="#c7d1d4" stroke="#3b4245" stroke-width="3" />
  <path d="M-36 4Q0 16 36 4V11Q0 26-36 11Z" fill="#4c5558" stroke="#2b3032" stroke-width="2" /></g>`;

const machine = svg`<g transform="translate(830 400) scale(.33333)">
  <!-- lower bay interior -->
  ${q("565,1212 1460,1022 1455,1372 570,1555", "#c4c4c5")}
  ${q("340,1462 1150,1290 1350,1370 575,1548 480,1530", "#cccdce")}
  ${q("1195,1080 1435,1025 1435,1345 1195,1222", "#b3b3b4", "#888")}
  ${q("205,1090 485,1205 485,1550 210,1440", "#b4b4b4", "#777")}
  ${q("250,1405 485,1352 485,1372 255,1420", "#d6d6d6", "#888", 2)}
  ${q("300,1415 485,1374 485,1430 335,1462", "#ababab", "#888", 2)}
  ${q("335,1462 485,1431 485,1530", "#cccdce")}
  ${q("567,1335 1115,1220 1150,1232 567,1354", "#dadada", "#999", 2)}
  ${q("567,1356 1150,1236 1150,1290 568,1412", "#bababa", "#888")}
  ${q("205,1095 248,1112 250,1425 210,1436", "#a8a8a8", "#777")}
  ${q("1115,1085 1150,1078 1152,1232 1117,1222", "#b0b0b0", "#888")}
  ${q("1150,1078 1195,1075 1197,1222 1152,1235", "#c6c6c6", "#888")}
  ${q("1155,1232 1215,1226 1440,1338 1440,1358", "#dcdcdc", "#999", 2)}
  ${q("1152,1238 1450,1362 1350,1372 1150,1290", "#b2b2b2", "#888")}
  ${q("1432,1030 1460,1022 1460,1370 1435,1350", "#c3c3c3", "#777")}
  ${foot(1160, 1325, 0.55)}
  ${q("210,1438 245,1424 485,1538 485,1556", "#d6d6d6", "#777", 2)}
  ${q("572,1540 1445,1352 1460,1366 570,1556", "#d8d8d8", "#777", 2)}
  <!-- upper right bay interior -->
  ${q("925,712 1452,600 1458,965 930,1080", "#c2c2c3")}
  ${q("1190,658 1425,608 1425,935 1190,828", "#b5b5b6", "#888")}
  ${q("1110,672 1143,664 1145,835 1112,822", "#b0b0b0", "#888")}
  ${q("1143,664 1190,655 1192,826 1147,836", "#c9c9c9", "#888")}
  ${q("930,862 1112,822 1148,832 930,880", "#dadada", "#999", 2)}
  ${q("930,882 1146,836 1146,888 932,930", "#bababa", "#888")}
  ${q("1155,832 1192,826 1426,932 1425,962", "#dcdcdc", "#999", 2)}
  ${q("1148,838 1440,966 1345,972 1146,888", "#b4b4b4", "#888")}
  ${q("932,935 1110,895 1112,1025 932,1070", "#c0c0c0", "#999", 2)}
  ${q("1112,892 1146,886 1148,1025 1116,1032", "#adadad", "#888")}
  ${q("1146,888 1194,908 1194,1012 1148,1022", "#bdbdbd", "#888")}
  ${q("932,982 1050,1030 1005,1040 932,1006", "#e2e2e2", "#999", 2)}
  ${q("1424,606 1452,600 1456,968 1426,955", "#c3c3c3", "#777")}
  <!-- left middle bay -->
  ${q("560,920 850,862 850,1082 565,1145", "#c0c0c1")}
  ${q("565,922 850,864 850,1070", "#b0b0b0")}
  ${q("575,945 850,1060 765,1092 565,960", "#a8a8a8", "#888")}
  ${q("600,935 720,905 850,948 700,985", "#bcbcbc", "#888", 2)}
  ${q("660,935 740,918 785,935 700,955", "#a0a0a0", "#888", 2)}
  ${q("700,970 845,938 850,968 740,990", "#c8c8c8", "#999", 2)}
  ${q("565,962 765,1092 565,1140", "#c4c4c5", "#999", 2)}
  ${q("848,862 882,855 885,1082 852,1080", "#b5b5b5", "#666")}
  ${q("565,1142 868,1080 1435,955 1460,968 565,1158", "#d8d8d8", "#777", 2)}
  <!-- upper chamber, behind the side rail -->
  ${q("565,590 845,705 845,800 700,830 560,810", "#b4b4b5")}
  ${q("612,610 612,740 780,800 780,690", "#bdbdbd", "#999", 2)}
  ${q("612,740 845,800 760,815 612,760", "#dcdcdc", "#aaa", 2)}
  ${q("678,690 733,712 733,810 678,788", "#c4c4c5", E, 3)}
  ${q("716,758 735,750 756,760 756,798 716,786", "#9d9d9d", "#555", 2)}
  <ellipse cx="603" cy="687" rx="17" ry="32" fill="#ababab" stroke="#333" stroke-width="4" />
  ${l("612,658 622,690 612,716", "#333", 3)}
  <ellipse cx="803" cy="768" rx="18" ry="29" fill="#c4c4c4" stroke="#333" stroke-width="4" />
  ${q("782,782 818,788 818,800 782,798", "#e8e8e8", "#666", 2)}
  <!-- chute and left cross members -->
  ${q("370,745 545,705 572,708 655,830 555,855 400,790", "#cfcfd0", "#888")}
  ${q("535,735 572,745 640,828 560,840", "#dcdcdc", "#aaa", 2)}
  ${q("615,775 735,810 655,828", "#8f8f8f", "#444")}
  ${l("565,705 655,830", "#333", 4)}
  ${q("280,712 530,657 562,668 320,722", "#ffffff", "#333")}
  ${q("320,722 562,668 562,705 372,745", "#b0b0b0", "#444")}
  ${l("322,726 562,672", "#333", 3, "14 4")}
  ${q("556,855 850,792 876,802 876,812 558,876", "#ffffff", "#333")}
  ${q("558,876 876,812 880,856 560,918", "#bababa", "#333")}
  ${l("560,874 876,808", "#333", 5, "16 4")}
  ${l("560,918 880,856", "#2e2e2e", 7, "18 3")}
  <!-- top frame -->
  ${q("532,520 565,512 565,668 532,655", "#a4a4a4", "#333")}
  ${q("535,520 565,514 860,640 845,650", "#f2f2f2", "#444")}
  ${q("565,535 845,648 843,705 565,590", "#a2a2a2", "#444")}
  ${l("565,588 843,706", "#2a2a2a", 6, "22 3")}
  ${l("572,536 848,648", "#2e2e2e", 5, "14 4")}
  ${q("860,650 1470,520 1500,530 880,665", "#f4f4f4", "#444")}
  ${q("925,665 1452,545 1452,600 928,712", "#bdbdbd", "#444")}
  ${l("928,710 1452,599", "#2a2a2a", 6, "26 3")}
  ${l("925,655 1450,541", "#2e2e2e", 5, "16 4")}
  ${q("845,645 880,660 885,800 848,790", "#999", "#333")}
  ${q("878,662 925,655 932,1080 888,1092", "#bcbcbc", "#333")}
  ${l("925,645 932,1080", "#2a2a2a", 5, "40 4")}
  ${l("885,860 888,1090", "#2a2a2a", 5, "30 5")}
  ${q("1454,545 1502,532 1512,1414 1466,1424", "#b4b4b4", "#555")}
  ${l("1456,545 1467,1424", "#333", 4, "30 4")}
  ${l("1502,532 1512,1414", "#444", 4, "40 3")}
  <!-- shelf rail and bottom rail -->
  ${q("565,1160 1460,970 1460,1022 565,1212", "#bbbbbb", "#444")}
  ${l("565,1160 1460,970", "#3a3a3a", 6, "10 3")}
  ${l("565,1211 1460,1022", "#2a2a2a", 6, "26 3")}
  ${q("568,1558 1462,1370 1464,1424 568,1612", "#bbbbbb", "#444")}
  ${l("568,1558 1462,1370", "#3a3a3a", 6, "10 3")}
  ${l("568,1612 1464,1424", "#2a2a2a", 4, "16 4")}
  <!-- left leg and left side rails -->
  ${q("170,1030 202,1040 207,1492 175,1480", "#9e9e9e", "#333")}
  ${q("200,1040 485,1160 485,1208 205,1090", "#a0a0a0", "#333")}
  ${l("205,1090 485,1208", "#2a2a2a", 6, "22 3")}
  ${q("210,1440 485,1556 490,1608 208,1490", "#a0a0a0", "#333")}
  ${l("212,1440 485,1556", "#2a2a2a", 6, "12 3")}
  ${q("165,662 212,655 242,665 240,700 190,690", "#f4f4f4", "#333")}
  <!-- front left plate -->
  ${q("152,665 505,812 510,1172 200,1042 156,1030", "#9f9f9f", "#333")}
  ${l("165,662 512,812", "#333", 4, "22 3")}
  ${l("242,665 242,700", "#333", 4)}
  ${q("484,1162 515,1172 520,1622 490,1610", "#a3a3a3", "#333")}
  ${q("498,810 514,812 520,1175 505,1172", "#8b8b8b", "#333")}
  ${q("514,812 556,802 568,1612 524,1624", "#bcbcbc", "#333")}
  ${l("556,802 568,1612", "#2a2a2a", 5, "46 4")}
  ${q("482,802 522,792 556,802 514,814", "#ffffff", "#333")}
  <!-- outlet frame -->
  ${q("234,706 412,782 412,950 300,975 236,900", "#b30fb3", "#5e0a5e", 3)}
  ${q("247,735 397,797 397,950 300,972 248,870", "#343434")}
  ${["242,715", "290,738", "348,764", "404,795", "240,792", "408,862", "405,937"].map((s) => { const [x, y] = s.split(","); return svg`<circle cx=${x} cy=${y} r="4" fill="#3b083b" />`; })}
  <!-- tray -->
  ${q("130,1048 240,990 300,972 438,942 444,968 310,1012", "#003f73", "#222")}
  ${q("310,1015 436,945 444,970 328,1036", "#0b6fc4", "#222")}
  ${[[348, 1012], [388, 988], [430, 965]].map(([x, y]) => svg`<circle cx=${x} cy=${y} r="5" fill="#083a66" />`)}
  <path d="M40 912Q38 895 66 882L220 850 302 970Q225 985 130 1048Z" fill="#00ccff" stroke="#2a4a55" stroke-width="4" />
  ${foot(215, 1527)}${foot(529, 1663)}${foot(1474, 1462)}
  <!-- hood -->
  ${q("558,175 1145,50 1328,130 1468,415 1470,525 882,655 562,520", "#c9c9ca")}
  ${q("558,175 747,255 882,540 882,652 562,518", "#b1b1b2")}
  ${q("590,515 850,462 882,540 882,650", "#a8a8a9")}
  ${q("558,175 1145,50 1145,172 747,255", "#d6d6d6")}
  ${q("1145,50 1328,130 1145,172", "#cbcbcc")}
  ${q("747,255 1145,172 1145,390 850,462", "#d8d8d9")}
  ${q("1145,172 1328,130 1468,415 1380,448 1145,390", "#c8c8c9")}
  ${q("848,462 1145,390 1385,455 1325,447 880,540", "#d9d9da")}
  ${q("858,468 1145,400 1300,455 880,540", "#ededed", "#bbb", 2)}
  ${q("1150,395 1468,415 1380,434 1300,452", "#c8c8c9")}
  ${q("882,540 1468,415 1470,525 882,650", "#adadae")}
  ${q("1145,484 1330,447 1440,525 1145,592", "#a5a5a6")}
  ${l("850,462 1148,404 1440,530", "#f6f6f6", 7)}
  ${l("590,515 850,462", "#888", 2)}${l("700,555 1115,470 1145,462 1145,592", "#8c8c8c", 2)}
  ${l("1190,478 1190,582", "#8c8c8c", 2)}${l("1112,470 1112,598", "#8c8c8c", 2)}${l("1190,485 1350,548", "#8c8c8c", 2)}
  ${l("1145,50 1145,400", "#bbb", 2)}
  ${l("747,255 558,175 1145,50 1328,130", "#333", 5)}
  ${l("747,255 1328,130 1468,415 1470,525", "#2d2d2d", 6)}
  ${l("558,175 562,520", "#333", 5)}
  ${l("747,255 882,540 1468,415", "#333", 4)}
  ${l("882,540 882,655", "#333", 4)}
  ${l("562,520 882,655 1470,525", "#444", 4, "20 4")}
  ${[[578, 534], [712, 590], [848, 646], [1053, 624], [1183, 597], [1312, 569], [1442, 541]].map(([x, y]) => svg`<circle cx=${x} cy=${y} r="6" fill="#222" />`)}
  <!-- controls on the hood -->
  <ellipse cx="1118" cy="298" rx="24" ry="20" fill="#e4e4e4" opacity=".7" />
  <circle cx="1042" cy="302" r="13" fill="#26324c" stroke="#1b1b1b" stroke-width="2" /><circle cx="1042" cy="301" r="7" fill="#2f5fc4" />
  <circle cx="1142" cy="280" r="19" fill="#223022" /><circle cx="1147" cy="274" r="14" fill="#1ed321" stroke="#0d4a10" stroke-width="3" />
  ${q("1210,262 1228,238 1268,275 1250,290", "#d8d8d8", "#444")}
  <circle cx="1249" cy="250" r="26" fill="#33312f" /><path d="M1234 236l16-10 18 12-2 20-14-6-14 8z" fill="#e84a24" /><path d="M1250 226v28M1236 240l26 16" stroke="#4a2a20" stroke-width="3" />
</g>`;

const triad = svg`<g transform="translate(470 850) scale(.33333)" font-family="Liberation Sans, sans-serif" font-size="44">
  ${q("133,145 195,128 236,145 236,215 190,222 135,212", "#d4d5d6", "#9a9a9a")}
  ${l("133,145 178,158 236,145", "#9a9a9a", 3)}${l("195,128 195,205 236,215", "#aaa", 3)}
  ${l("190,221 255,208", "#d43232", 6)}${q("250,200 274,205 252,216", "#d02020")}
  ${l("165,222 125,204", "#2c8a3c", 6)}${q("106,196 132,198 124,212", "#1f7a2f")}
  ${l("175,212 175,130", "#1d3fd0", 11)}${q("164,138 175,108 184,138", "#1030c0")}
  <circle cx="175" cy="225" r="16" fill="#c9c9c9" stroke="#8d8d8d" stroke-width="2" />
  <text x="158" y="110" fill="#4a6cf0">Z</text><text x="82" y="208" fill="#3fa04a">Y</text><text x="274" y="216" fill="#e04545">X</text>
</g>`;

@customElement("app-root")
export class AppRoot extends LitElement {
  @state() private snaps = SNAPS.map((s) => s[2]);

  static styles = css`
    :host { display: block; min-height: 100vh; background: #fff; color: #111; font: 15px/15px "Liberation Sans", "Noto Sans CJK SC", sans-serif; }
    * { box-sizing: border-box; }
    button, select, input { font: inherit; color: inherit; margin: 0; }
    button { border: 0; background: none; padding: 0; display: flex; align-items: center; justify-content: center; flex: none; }
    svg { display: block; flex: none; }
    .defs { position: absolute; width: 0; height: 0; }
    .ic { width: 32px; height: 32px; }
    .ic-m { width: 29px; height: 29px; }
    .ic-s { width: 22px; height: 22px; }
    .mono { font-family: "Liberation Mono", monospace; font-size: 12px; }

    .title { height: 28px; display: flex; align-items: center; gap: 6px; padding: 0 3px 0 2px; color: #fff; background: linear-gradient(#000 0 2px, #77787b 3px, #4a4a4d 9px, #1b1b1b 10px 27px, #444 28px); }
    .title-text { flex: 1; font-size: 16px; line-height: 24px; }
    .brand { font: 900 16px/24px Inter, sans-serif; margin-right: 26px; }
    .win { width: 24px; height: 24px; border: 1px solid #777; border-radius: 3px; background: linear-gradient(#666, #2e2e2e); }
    .close { background: linear-gradient(#f09a85, #d8401c 50%, #e0603c); border-color: #e8a090; }

    .menu { height: 30px; display: flex; align-items: center; gap: 17px; padding: 0 6px 0 3px; background: #e4e4e4; border-bottom: 1px solid #c6c6c6; }
    .menu-lead { display: flex; align-items: center; gap: 2px; margin-right: -13px; }
    .menu a { color: #111; text-decoration: none; line-height: 20px; white-space: nowrap; }
    .menu u { text-underline-offset: 2px; }
    .mdi { display: flex; gap: 4px; margin-left: auto; }
    .mdi button { width: 21px; height: 22px; border: 2px solid #8f8f8f; border-radius: 4px; background: #f2f2f2; }

    .bars { background: linear-gradient(#e3e3e3, #c9c9c9); border-bottom: 2px solid #9f9f9f; }
    .row { display: flex; height: 77px; }
    .row.slim { height: 43px; }
    .band { display: flex; align-items: stretch; border: solid; border-width: 1px 1px 1px 0; border-color: #efefef #b9b9b9 #b9b9b9; }
    .grip { width: 8px; margin: 6px 0; background: radial-gradient(circle at 6px 3px, #999 1px, #f4f4f4 2px, transparent 2px) 0 0 / 8px 5px; }
    .small .grip { width: 9px; }
    .sep { width: 6px; margin: 2px 0; background: linear-gradient(90deg, transparent 2px, #b0b0b0 2px 3px, #f4f4f4 3px 4px, transparent 4px); }
    .tb { width: 39px; }
    .arr { width: 15px; }
    .big + .arr { width: 14px; }
    .arr::before, .over::before { content: ""; border: 4px solid transparent; border-top: 5px solid #111; border-bottom: 0; }
    .over { width: 18px; align-items: flex-end; padding-bottom: 7px; }
    .over.narrow, .small .over { width: 16px; }
    .bottom .over.narrow { width: 12px; }
    .big { width: 76px; flex-direction: column; justify-content: flex-start; gap: 3px; padding: 4px 6px 0; text-align: center; }
    .label { width: 62px; display: block; }
    .wide { padding: 0 2px; gap: 4px; white-space: nowrap; }
    .wide .ic { margin-left: 3px; }
    .start { width: 70px; }
    .find { width: 120px; }

    .select { height: 34px; display: flex; align-items: center; padding-left: 7px; background: linear-gradient(#b4b4b4, #d4d4d4 10px, #dcdcdc); border-bottom: 1px solid #bdbdbd; }
    .combo { display: flex; position: relative; height: 26px; margin-right: 11px; }
    .combo select { appearance: none; width: 138px; height: 26px; border: 2px solid #8c9096; border-radius: 4px; background: #fff; padding: 0 22px 0 0; line-height: 20px; }
    .combo.long { margin-right: 6px; }
    .combo.long select { width: 146px; }
    .combo::after { content: ""; position: absolute; right: 2px; top: 2px; width: 19px; height: 22px; pointer-events: none; background: linear-gradient(#d5ebff, #55a5e8); border-radius: 0 3px 3px 0; }
    .combo::before { content: ""; position: absolute; z-index: 1; right: 4px; top: 9px; border: 8px solid transparent; border-top: 9px solid #16202c; border-bottom: 0; pointer-events: none; }
    .sb { width: 29px; height: 27px; border: 1px solid transparent; border-radius: 3px; }
    .sb .ic-s { width: 24px; height: 24px; }
    .sb[aria-pressed="true"] { background: #fff; border-color: #555; }
    .select .sep, .status .sep { align-self: stretch; }
    .select .arr { height: 27px; width: 12px; }
    .push { margin-left: auto; }
    .select .push { width: 22px; padding-top: 14px; }
    .status { height: 28px; display: flex; align-items: center; background: #d9d9d9; border-bottom: 2px solid #979797; padding-right: 1px; }
    .status .sep { margin: 0; }
    .s1 { width: 896px; } .s2 { flex: 1; } .s3 { width: 18px; } .s4 { width: 38px; }
    .status button { width: 25px; }

    .main { display: flex; align-items: stretch; }
    .tabs { width: 41px; padding: 19px 0 0 6px; display: flex; flex-direction: column; gap: 3px; align-items: flex-end; background: linear-gradient(90deg, #a3a3a3, #b9b9b9); border-right: 1px solid #777; }
    .tab { width: 32px; height: 50px; border: 2px solid #868686; border-right: 0; border-radius: 5px 0 0 5px; background: linear-gradient(#e8e8e8, #c9c9c9); overflow: hidden; }
    .tab.on { width: 35px; height: 54px; background: #ececec; margin-bottom: -2px; }
    .tab.far { margin-top: 14px; }
    .tab.cut { height: 40px; align-items: flex-start; padding-top: 9px; border-bottom-style: dashed; }
    .pager { display: flex; flex-direction: column; gap: 2px; margin: 1px 9px 4px 0; }
    .pager button { width: 19px; height: 18px; border: 1px solid #8a8a8a; border-top-color: #fff; border-left-color: #fff; background: #e2e2e2; }
    .panel { width: 429px; flex: none; display: flex; flex-direction: column; background: #ececec; border: solid #8c8c8c; border-width: 1px 3px 3px 0; padding: 0 11px 0 12px; }
    .panel-head { height: 42px; display: flex; align-items: center; gap: 8px; padding: 6px 0 0 5px; font-weight: 700; font-size: 16px; }
    .panel-head h2 { margin: 0; font-size: 16px; line-height: 20px; }
    .tree { border: 2px solid #808080; background: #fff; position: relative; }
    .col { height: 21px; line-height: 19px; padding-left: 7px; background: linear-gradient(#f4f4f4, #d8dadd); border-bottom: 1px solid #8a8a8a; }
    .rows { margin: 0; padding: 0; list-style: none; min-height: 558px; background: repeating-linear-gradient(#fff 0 24px, #e4e4e4 24px 25px, #f6f6f6 25px 49px, #e4e4e4 49px 50px); }
    .colline { position: absolute; right: 5px; top: 0; bottom: 21px; width: 2px; background: linear-gradient(#fff 0 21px, #555 21px); }
    .node { height: 25px; display: flex; align-items: center; color: #333; }
    .node label { display: flex; align-items: center; line-height: 22px; }
    .guide { align-self: stretch; width: 13px; margin-left: 35px; margin-right: 2px; border-left: 1px dotted #999; display: flex; align-items: center; }
    .guide::after, .dots::after { content: ""; flex: 1; border-top: 1px dotted #999; }
    .last .guide { height: 13px; align-self: flex-start; align-items: flex-end; }
    .dots { width: 9px; display: flex; }
    .elbow { width: 11px; height: 13px; align-self: flex-end; margin-left: 12px; border: dotted #999; border-width: 1px 0 0 1px; }
    .exp { width: 12px; height: 12px; margin-left: 5px; border: 1px solid #888; border-radius: 2px; background: #fff; font-size: 12px; line-height: 10px; }
    .chk { appearance: none; width: 15px; height: 15px; border: 2px solid #111; background: #fff; flex: none; display: flex; }
    .chk:checked::before { content: ""; flex: 1; background: #e0161c; clip-path: polygon(0 45%, 22% 35%, 40% 55%, 90% 0, 100% 12%, 48% 100%, 26% 100%); }
    .node .ic-s { width: 20px; height: 20px; margin: 0 2px 0 4px; }
    .root .ic-s { width: 22px; height: 22px; margin: 0 2px; }
    .fold .ic-s { width: 22px; height: 22px; margin: 0 2px 0 0; }
    .hscroll { height: 20px; display: flex; align-items: center; background: #efefef; padding: 0 4px 0 2px; }
    .hscroll button { width: 16px; }
    .thumb { height: 19px; width: 198px; margin-left: 2px; margin-right: auto; background: #cdcdcd; }
    .split { height: 19px; display: flex; align-items: center; gap: 5px; padding-bottom: 3px; }
    .split i { flex: 1; height: 2px; background: linear-gradient(#b4b4b4, #fff); }
    .split b { width: 74px; height: 8px; background: #d4d4d4; border: 1px solid #999; border-top-color: #fff; border-left-color: #fff; }
    .view { flex: 1; min-width: 0; display: flex; background: linear-gradient(#b0b1b3, #bdbebf 13%, #cfd0d1 38%, #dedfe0 57%, #e5e6e8 76%, #e7e9eb); }
    .view svg { width: 100%; height: auto; align-self: flex-start; flex: 1; min-width: 0; }

    .bottom { height: 43px; display: flex; position: relative; background: linear-gradient(#ececec, #cacaca); }
    .finish { color: #8f8f8f; padding: 0 4px 0 2px; white-space: nowrap; }
    .ime { position: absolute; right: 0; bottom: 0; display: flex; align-items: center; }
    .ime-bar { display: flex; height: 32px; padding: 0 0 0 1px; margin: 0 1px 0 -2px; background: #fff; border: 1px solid #b9cdf0; color: #0b6fd6; }
    .ime-bar button { width: 30px; font-size: 18px; font-weight: 700; }

    .task { height: 50px; display: flex; align-items: center; padding-right: 5px; color: #fff; background: linear-gradient(90deg, #20353d, #21353f 45%, #1f2f40 70%, #1b2740 82%, #1a2540); }
    .task > button { height: 50px; }
    .win-start { width: 60px; }
    .search { display: flex; height: 43px; background: #ededed; color: #111; align-items: center; }
    .search input { width: 172px; height: 43px; border: 0; padding: 0 0 3px; background: none; font-size: 16px; outline: 0; }
    .search input::placeholder { color: #111; opacity: 1; }
    .search svg { margin: 0 0 0 4px; }
    .search button { width: 70px; height: 43px; background: #1f89ff; color: #fff; }
    .tgrip { width: 5px; height: 26px; margin: 0 10px 0 8px; border: solid #4a5a63; border-width: 0 1px; }
    .app { width: 62px; border-bottom: 3px solid transparent; padding-top: 1px; }
    .app.run { width: 51px; border-color: #7ab8e8; margin: 0 5px 0 7px; }
    .app.cur { width: 61px; border-color: #7ab8e8; background: #4b5e67; }
    .tray { width: 30px; }
    .clock { width: 92px; text-align: center; font: 16px/23px "Open Sans", "Noto Sans", sans-serif; }
    .notice { width: 52px; }
    .peek { width: 1px; height: 50px; background: #7a8494; margin-left: 9px; }
  `;

  private toggleSnap(i: number) {
    this.snaps = this.snaps.map((v, n) => (n === i ? !v : v));
  }

  private items(list: Item[]) {
    return list.map((it) => {
      if (it.k === "|") return html`<span class="sep"></span>`;
      const arrow = it.d ? html`<button class="arr" aria-label=${it.l + " 选项"}></button>` : nothing;
      if (it.k === "b") return html`<button class="tb" aria-label=${it.l}>${icon(it.i, "ic-m")}</button>${arrow}`;
      return html`<button class="big">${icon(it.i)}<span class="label">${it.l}${it.key ? html`<br /><span class="mono">(<u>${it.key}</u>)...</span>` : nothing}</span></button>${arrow}`;
    });
  }

  private band(list: Item[], small = false) {
    return html`<div class="band ${small ? "small" : ""}"><span class="grip"></span>${this.items(list)}<button class="over" aria-label="工具条选项"></button></div>`;
  }

  private sb(i: string, label: string) {
    return html`<button class="sb" aria-label=${label}>${icon(i, "ic-s")}</button>`;
  }

  private tray(label: string, body: Frag) {
    return html`<button class="tray" aria-label=${label}><svg width="22" height="22" viewBox="0 0 22 22">${body}</svg></button>`;
  }

  private ime(label: string, body: Frag) {
    return html`<button aria-label=${label}><svg width="20" height="22" viewBox="0 0 20 22">${body}</svg></button>`;
  }

  private defs() {
    const grad = (id: string, a: string, m: string, z: string) => svg`<linearGradient id=${id} x1="0" y1="0" x2="1" y2="0.4"><stop offset="0" stop-color=${a} /><stop offset=".5" stop-color=${m} /><stop offset="1" stop-color=${z} /></linearGradient>`;
    return html`<svg class="defs" aria-hidden="true"><defs>
      ${grad("gGold", "#ffe98a", "#fbd348", "#f0b429")}${grad("gBlue", "#b5ccff", "#8aa9fb", "#6288f2")}${grad("gSky", "#a9d8ff", "#5aaaf8", "#2f80e8")}
      ${grad("gOrange", "#ffe27a", "#fbb02a", "#f08a18")}${grad("gPurple", "#e2b3f5", "#c06be0", "#8f3cc0")}${grad("gSteel", "#ffffff", "#c4c4c4", "#7d7d7d")}
      ${grad("gCyl", "#7f95f5", "#c8d4ff", "#6f88f0")}${grad("gPlane", "#ffffff", "#eef5ef", "#bfe0c6")}${grad("gPage", "#ffffff", "#f1f3ff", "#c2ccf8")}${grad("gLemon", "#fffbc4", "#f8ea6e", "#e3c22a")}
      ${grad("gGlobe", "#8fd8ff", "#2f8fe8", "#0f3f9e")}
      <linearGradient id="gRain" x1="0" y1="0" x2="0" y2="1"><stop offset="0" stop-color="#e01515" /><stop offset=".25" stop-color="#ffe000" /><stop offset=".5" stop-color="#20e020" /><stop offset=".75" stop-color="#10d8e8" /><stop offset="1" stop-color="#1010e0" /></linearGradient>
    </defs></svg>`;
  }

  private menuLabel(n: string, k: string) {
    if (k) return html`${n}<span class="mono">(<u>${k}</u>)</span>`;
    const [latin, rest] = n.split(" ");
    return html`<span class="mono">${latin} </span>${rest}`;
  }

  private tree() {
    return html`<div class="tree">
      <div class="col">描述性部件名</div>
      <ul class="rows" role="tree" aria-label="装配导航器">
        <li class="node fold" role="treeitem"><span class="elbow"></span>${icon("folderopen", "ic-s")}截面</li>
        <li class="node root" role="treeitem" aria-expanded="true"><button class="exp" aria-label="折叠">−</button><span class="dots"></span><label><input class="chk" type="checkbox" checked />${icon("asm", "ic-s")}机架</label></li>
        ${PARTS.map(([n, code], i) => html`<li class="node ${i === PARTS.length - 1 ? "last" : ""}" role="treeitem"><span class="guide"></span><label><input class="chk" type="checkbox" checked />${icon("part", "ic-s")}${n}<span class="mono">${code}</span></label></li>`)}
      </ul>
      <div class="hscroll">
        <button aria-label="向左滚动"><svg width="10" height="12" viewBox="0 0 10 12">${p("M8 1L3 6l5 5", "none", "#444", 2.6)}</svg></button>
        <span class="thumb"></span>
        <button aria-label="向右滚动"><svg width="10" height="12" viewBox="0 0 10 12">${p("M2 1l5 5-5 5", "none", "#444", 2.6)}</svg></button>
      </div>
      <span class="colline"></span>
    </div>`;
  }

  render() {
    const tab = (i: string, label: string, cls = "") => html`<button class="tab ${cls}" aria-label=${label}>${icon(i, "ic-m")}</button>`;
    const pg = (label: string, d: string, color: string) => html`<button aria-label=${label}><svg width="12" height="12" viewBox="0 0 12 12">${p(d, color, color, 1)}</svg></button>`;
    return html`
      ${this.defs()}
      <header class="title">${icon("nx", "ic-s")}<span class="title-text">NX 8 - 建模 - [机架.prt]</span><span class="brand">SIEMENS</span>
        <button class="win" aria-label="最小化"><svg width="16" height="16" viewBox="0 0 16 16">${r(3, 10, 9, 3, "#fff")}</svg></button>
        <button class="win" aria-label="还原"><svg width="16" height="16" viewBox="0 0 16 16">${p("M5 6V2h8v7h-3", "none", "#fff", 1.6)}${r(2, 6, 8, 7, "none", "#fff", 1.8)}</svg></button>
        <button class="win close" aria-label="关闭"><svg width="16" height="16" viewBox="0 0 16 16">${p("M2 2l12 12M14 2L2 14", "none", "#fff", 3)}</svg></button>
      </header>
      <nav class="menu">
        <span class="menu-lead"><svg width="5" height="22" viewBox="0 0 5 22">${[2, 7, 12, 17].map((y) => r(1, y, 2, 2, "#999"))}</svg>${icon("nx", "ic-s")}</span>
        ${MENUS.map(([n, k]) => html`<a href="#">${this.menuLabel(n, k)}</a>`)}
        <span class="mdi">
          <button aria-label="最小化文档"><svg width="14" height="14" viewBox="0 0 14 14">${r(3, 10, 8, 2, "#555")}</svg></button>
          <button aria-label="还原文档"><svg width="14" height="14" viewBox="0 0 14 14">${p("M5 5V2h7v6h-2", "none", "#555", 1.6)}${r(2, 6, 8, 6, "none", "#555", 1.6)}</svg></button>
          <button aria-label="关闭文档"><svg width="14" height="14" viewBox="0 0 14 14">${p("M3 3l8 8M11 3l-8 8", "none", "#444", 3)}</svg></button>
        </span>
      </nav>
      <section class="bars">
        <div class="row">
          <div class="band"><span class="grip"></span>
            <button class="wide start">${icon("nx")}开始</button><button class="arr" aria-label="开始 选项"></button>
            ${this.items([b("newdoc", "新建"), b("open", "打开"), b("save", "保存"), S, b("cut", "剪切"), b("copy", "复制"), b("paste", "粘贴"), b("del", "删除"), S, b("undo", "撤消"), b("redo", "重做"), S])}
            <button class="wide find">${icon("finder")}命令查找器</button>
            ${this.items([b("tool", "工具", true), S, b("info", "对象信息")])}
            <button class="over" aria-label="工具条选项"></button>
          </div>
          ${this.band(SYNC)}
        </div>
        <div class="row">${this.band(FEATURE)}${this.band(VIEW)}${this.band(UTIL)}</div>
        <div class="row slim">${ROW3.map((x) => this.band(x, true))}</div>
      </section>
      <section class="select">
        <span class="combo"><select aria-label="选择过滤器"><option>没有选择过滤器</option></select></span>
        <span class="combo long"><select aria-label="选择范围"><option>整个装配</option></select></span>
        ${this.sb("gface", "选择")}<span class="sep"></span>${this.sb("snapfilter", "过滤")}<button class="arr" aria-label="过滤选项"></button>
        ${this.sb("back", "返回")}${this.sb("note", "备注")}${this.sb("gcurve", "曲线")}${this.sb("gpath", "路径")}<span class="sep"></span>
        ${this.sb("rect", "矩形选择")}<button class="arr" aria-label="矩形选择选项"></button><span class="sep"></span>
        ${SNAPS.map(([i, n], k) => html`<button class="sb" aria-label=${n} aria-pressed=${this.snaps[k] ? "true" : "false"} @click=${() => this.toggleSnap(k)}>${icon(i, "ic-s")}</button>`)}
        <span class="sep"></span>${this.sb("solid", "实体")}
        <button class="arr push" aria-label="选择条选项"></button>
      </section>
      <section class="status"><span class="s1"></span><span class="sep"></span><span class="s2"></span><span class="sep"></span><span class="s3"></span><span class="sep"></span><span class="s4"></span><span class="sep"></span>
        <button aria-label="完成">${icon("flag", "ic-s")}</button><button aria-label="全屏">${icon("fullscr", "ic-s")}</button></section>
      <main class="main">
        <div class="tabs">
          ${tab("asmnav", "装配导航器", "on")}${tab("mirror", "约束导航器")}${tab("partnav", "部件导航器")}${tab("books", "重用库")}
          ${tab("infoball", "HD3D 工具", "far")}${tab("webpage", "浏览器", "far")}${tab("clock", "历史记录", "far")}
          ${tab("doccard", "角色")}${tab("spectrum", "系统材料")}${tab("drill", "加工向导", "cut")}
          <div class="pager">${pg("到顶部", "M1 1h10M6 4l4 4H2z", "#a8a8a8")}${pg("向上", "M6 4l4 4H2z", "#a8a8a8")}${pg("向下", "M6 8l4-4H2z", "#444")}${pg("到底部", "M1 10h10M6 7l4-4H2z", "#444")}</div>
        </div>
        <aside class="panel">
          <div class="panel-head">${icon("pin", "ic-s")}<h2>装配导航器</h2></div>
          ${this.tree()}
          <div class="split"><i></i><b></b><i></i></div>
        </aside>
        <div class="view"><svg viewBox="470 319 1450 668" role="img" aria-label="机架">${machine}${triad}</svg></div>
      </main>
      <section class="bottom">
        <div class="band small"><span class="grip"></span>${this.items(ASM)}<button class="over narrow" aria-label="工具条选项"></button></div>
        <div class="band small"><span class="grip"></span>${this.items([b("sketch", "草图"), b("flag", "完成草图标志")])}<button class="finish">完成草图</button>${this.items(SKETCH)}<button class="over narrow" aria-label="工具条选项"></button></div>
        <div class="ime">
          <svg width="40" height="40" viewBox="0 0 40 40" aria-hidden="true">${p("M2 8Q1 6 4 5L30 1q3 0 4 3l5 26q0 3-3 4L10 39q-3 0-4-3z", "#f0562a")}${svg`<path d="M31 11Q19 5 13 11t6 9q10 1 8 6T9 29" fill="none" stroke="#fff" stroke-width="5" />`}</svg>
          <div class="ime-bar">
            <button>中</button>
            ${this.ime("标点", [c(6, 8, 2.4, "none", "#0b6fd6", 2), p("M13 11h5v4q0 4-4 5 2-3 1-5h-2z", "#0b6fd6")])}
            ${this.ime("语音", [r(6, 1, 8, 12, "#0b6fd6", "none", 0, 4), p("M3 9q0 7 7 7t7-7M10 16v5", "none", "#0b6fd6", 2.2)])}
            ${this.ime("键盘", [r(1, 4, 18, 15, "none", "#0b6fd6", 2, 2), ...[7, 11].map((y) => [4, 7.5, 11, 14.5].map((x) => r(x, y, 2, 2, "#0b6fd6"))), p("M6 16h8", "none", "#0b6fd6", 2)])}
            ${this.ime("皮肤", p("M6 2q4 3 8 0l6 4-3 6-2-1v9H5v-9l-2 1-3-6z", "#0b6fd6"))}
            ${this.ime("工具箱", [r(1, 3, 8, 8, "#0b6fd6", "none", 0, 2), r(12, 4, 6, 6, "none", "#0b6fd6", 2, 1), r(1, 13, 8, 8, "#0b6fd6", "none", 0, 2), r(11, 13, 8, 8, "#0b6fd6", "none", 0, 2)])}
          </div>
        </div>
      </section>
      <footer class="task">
        <button class="win-start" aria-label="开始菜单"><svg width="20" height="20" viewBox="0 0 20 20">${p("M0 3l8-1v7H0zM9 2l11-2v9H9zM0 10h8v8l-8-1zM9 10h11v10L9 18z", "#fff")}</svg></button>
        <div class="search">${icon("ie", "ic-m")}<input type="text" aria-label="搜索" placeholder="输入你想搜的" /><button>搜索一下</button></div>
        <span class="tgrip"></span>
        <button class="app run" aria-label="画图">${icon("paint")}</button>
        <button class="app" aria-label="计算器">${icon("calc", "ic-m")}</button>
        <button class="app" aria-label="画板">${icon("setsq", "ic-m")}</button>
        <button class="app" aria-label="浏览器">${icon("eie", "ic-m")}</button>
        <button class="app cur" aria-label="NX 8">${icon("nx")}</button>
        <span class="push"></span>
        ${this.tray("USB", [r(6, 1, 10, 6, "#ddd", "#444"), r(5, 6, 12, 15, "#2fb52a", "#177a14"), p("M11 9v9M8 12v2l3 2M14 11v2l-3 2", "none", "#fff", 1.2)])}
        ${this.tray("显示隐藏的图标", p("M3 14l8-8 8 8", "none", "#fff", 1.5))}
        ${this.tray("电池", [r(6, 7, 13, 9, "#fff", "#fff", 1), r(19, 10, 2, 3, "#fff"), p("M1 5h5v3q-1 2-2 2v6h3M2 3v2M5 3v2", "none", "#fff", 1.2)])}
        ${this.tray("网络", [p("M3 17Q5 5 19 4M7 18q2-9 12-10M11 19q1-6 8-7M15 19q1-2 4-3", "none", "#fff", 1.3), c(18, 18, 1.5, "#fff")])}
        ${this.tray("音量", [p("M1 8h3l5-5v16l-5-5H1z", "none", "#fff", 1.3), p("M13 8l7 7M20 8l-7 7", "none", "#fff", 1.4)])}
        ${this.tray("输入法", [c(11, 11, 9.5, "#8d93a3"), p("M7 7l8 8M15 7l-8 8", "none", "#1a2540", 2.6)])}
        <time class="clock" datetime="2023-10-06T14:22">14:22<br />2023/10/6</time>
        <button class="notice" aria-label="通知"><svg width="22" height="22" viewBox="0 0 22 22">${p("M1 2h20v15h-8l-3 3v-3H1z", "none", "#fff", 1.5)}</svg></button>
        <span class="peek"></span>
      </footer>
    `;
  }
}
